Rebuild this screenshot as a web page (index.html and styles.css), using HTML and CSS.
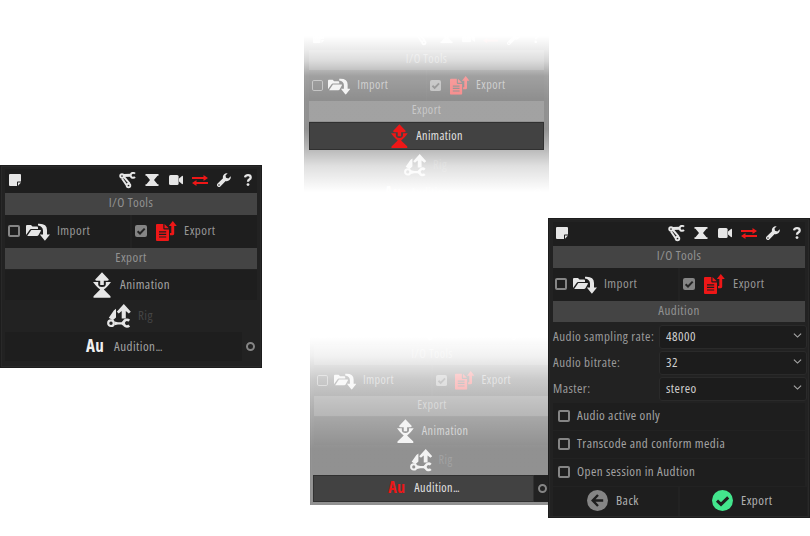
FILE: index.html
```html
<!DOCTYPE html>
<html lang="en">
<head>
<meta charset="utf-8">
<title>I/O Tools</title>
<link rel="stylesheet" href="styles.css">
</head>
<body>
<svg class="defs" aria-hidden="true">
  <symbol id="note" viewBox="0 0 12 12"><path d="M1 0H11Q12 0 12 1V7.5H8.7Q8 7.5 8 8.2V12H1Q0 12 0 11V1Q0 0 1 0Z"/><path d="M9 8.5H12L9 11.8Z"/></symbol>
  <symbol id="bones" viewBox="0 0 18 17"><g fill="none" stroke="currentColor"><circle cx="3" cy="4" r="1.8" stroke-width="1.9"/><circle cx="9.5" cy="13.5" r="1.8" stroke-width="1.9"/><path d="M3 6.5L7.4 13M5 5L10.5 11.3" stroke-width="2"/><path d="M5 3.6L11.5 3.2" stroke-width="3"/><path d="M16 1.7A2.5 2.5 0 1 0 16 5" stroke-width="2"/></g></symbol>
  <symbol id="hourglass" viewBox="0 0 14 12"><path d="M.5 0H13.5V1.8H12.5L9 6L12.5 10.2H13.5V12H.5V10.2H1.5L5 6L1.5 1.8H.5Z"/></symbol>
  <symbol id="camera" viewBox="0 0 14 10"><rect width="9.6" height="10" rx="1.5"/><path d="M10 3.6L13 1Q14 .5 14 1.5V8.5Q14 9.5 13 9L10 6.4Z"/></symbol>
  <symbol id="swap" viewBox="0 0 16 11"><path d="M0 1.9H11.5V0L16 3L11.5 6V4H0ZM16 7H4.5V5L0 8L4.5 11V9.1H16Z"/></symbol>
  <symbol id="wrench" viewBox="0 0 14 14"><path d="M13.7 3.3L11.4 5.4L9 4.8L8.5 2.5L10.7.3A4 4 0 0 0 6 5.3L.6 10.6A1.9 1.9 0 0 0 3.3 13.4L8.7 8A4 4 0 0 0 13.7 3.3ZM2 11.2A.8.8 0 1 1 2 12.8A.8.8 0 0 1 2 11.2Z"/></symbol>
  <symbol id="help" viewBox="0 0 8 12"><path d="M1 3.4Q1.4 1.2 4 1.2Q6.7 1.2 6.7 3.4Q6.7 4.6 5.3 5.5Q4 6.3 4 7.7" fill="none" stroke="currentColor" stroke-width="2.3"/><circle cx="4" cy="10.6" r="1.4"/></symbol>
  <symbol id="import" viewBox="0 0 24 18"><path d="M0 12V3Q0 2 1 2H5L6.5 3.5H11Q12 3.5 12 4.5V6H5.2Q4.2 6 3.8 6.8Z"/><path d="M5.3 7H14.4Q15.4 7 14.8 8L12.4 12.2Q12 13 11 13H1.2Z"/><path d="M12 .8Q21 .2 21 7V11.5H24L18.9 17.8L13.8 11.5H17V7.5Q16.7 3.4 12 2.6Z"/></symbol>
  <symbol id="export" viewBox="0 0 21 20"><path fill-rule="evenodd" d="M1 3H7.3V7.5Q7.3 8.5 8.3 8.5H13V19Q13 20 12 20H1Q0 20 0 19V4Q0 3 1 3ZM3 10.2V11.4H10.2V10.2ZM3 12.7V13.9H10.2V12.7ZM3 15.4V16.6H10.2V15.4Z"/><path d="M8.5 3L12.8 7.3H8.5Z"/><path d="M14 14.2V12H15.3V5H12.8L16.8 0L20.8 5H18.2V12.8Q18.2 14.2 16.8 14.2Z"/></symbol>
  <symbol id="anim" viewBox="0 0 18 26"><path d="M9 .3L15.8 7.4Q15.6 9 13.8 8.8H10.8V13H7.2V8.8H4.2Q2.4 9 2.2 7.4Z"/><path d="M0 9.9H5.2V12.4Q5.4 14.9 9 14.9T12.8 12.4V9.9H18L15 13.7Q13 16 10.8 17.6L17.5 24.2V25.8H.5V24.2L7.2 17.6Q5 16 3 13.7Z"/></symbol>
  <symbol id="rigup" viewBox="0 0 24 24"><path d="M9 4.8V13.5L5.8 16.2L1.8 13.7L6.8 6.5ZM16.8 0L23.8 7.8L21.8 9.4L18.8 7V14.5H14.7V7L11.7 9.4L9.8 7.8Z"/><circle cx="4" cy="19.2" r="2.8" fill="none" stroke="currentColor" stroke-width="2.2"/><path d="M7.5 17.5L11 18.2H14.5L16 17V21.5L14.5 20.6H11L7.5 21.3Z"/><path d="M22.2 16.7A3.3 3.3 0 1 0 22.2 21.5" fill="none" stroke="currentColor" stroke-width="2.7"/></symbol>
  <symbol id="tick" viewBox="0 0 12 12"><path d="M2.6 6.2L5 8.5L9.7 3.6" fill="none" stroke="#252525" stroke-width="2"/></symbol>
  <symbol id="chev" viewBox="0 0 8 5"><path d="M.4.6L4 4.1L7.6.6" fill="none" stroke="currentColor" stroke-width="1.1"/></symbol>
  <symbol id="back" viewBox="0 0 21 21"><circle cx="10.5" cy="10.5" r="10.5"/><path d="M11 5L5.7 10.5L11 16M6 10.5H16.2" fill="none" stroke="#1e1e1e" stroke-width="2.4"/></symbol>
  <symbol id="done" viewBox="0 0 21 21"><circle cx="10.5" cy="10.5" r="10.5"/><path d="M5 10.6L9 14.4L16.2 7.4" fill="none" stroke="#1e1e1e" stroke-width="3"/></symbol>
</svg>

<section class="panel menu p1">
  <div class="bar"><svg class="i note"><use href="#note"/></svg><div class="tools"><span><svg class="i bones"><use href="#bones"/></svg></span><span><svg class="i hour"><use href="#hourglass"/></svg></span><span><svg class="i cam"><use href="#camera"/></svg></span><span><svg class="i swap red"><use href="#swap"/></svg></span><span><svg class="i wrench"><use href="#wrench"/></svg></span><span><svg class="i help"><use href="#help"/></svg></span></div></div>
  <h2>I/O Tools</h2>
  <div class="modes"><div><i class="box"></i><svg class="i imp"><use href="#import"/></svg><b>Import</b></div><div><i class="box on"><svg class="i"><use href="#tick"/></svg></i><svg class="i exp red"><use href="#export"/></svg><b>Export</b></div></div>
  <h2>Export</h2>
  <div class="item anim"><svg class="i"><use href="#anim"/></svg><b>Animation</b></div>
  <div class="item rig"><svg class="i"><use href="#rigup"/></svg><b>Rig</b></div>
  <div class="last"><div class="item au"><strong>Au</strong><b>Audition<span class="dots">...</span></b></div><i class="ring"></i></div>
</section>

<section class="step s2"><div class="panel menu">
  <div class="bar"><svg class="i note"><use href="#note"/></svg><div class="tools"><span><svg class="i bones"><use href="#bones"/></svg></span><span><svg class="i hour"><use href="#hourglass"/></svg></span><span><svg class="i cam"><use href="#camera"/></svg></span><span><svg class="i swap red"><use href="#swap"/></svg></span><span><svg class="i wrench"><use href="#wrench"/></svg></span><span><svg class="i help"><use href="#help"/></svg></span></div></div>
  <h2>I/O Tools</h2>
  <div class="modes"><div><i class="box"></i><svg class="i imp"><use href="#import"/></svg><b>Import</b></div><div><i class="box on"><svg class="i"><use href="#tick"/></svg></i><svg class="i exp red"><use href="#export"/></svg><b>Export</b></div></div>
  <h2>Export</h2>
  <div class="item anim hot"><svg class="i"><use href="#anim"/></svg><b>Animation</b></div>
  <div class="item rig"><svg class="i"><use href="#rigup"/></svg><b>Rig</b></div>
  <div class="last"><div class="item au"><strong>Au</strong><b>Audition<span class="dots">...</span></b></div><i class="ring"></i></div>
</div></section>

<section class="step s3"><div class="panel menu">
  <div class="bar"><svg class="i note"><use href="#note"/></svg><div class="tools"><span><svg class="i bones"><use href="#bones"/></svg></span><span><svg class="i hour"><use href="#hourglass"/></svg></span><span><svg class="i cam"><use href="#camera"/></svg></span><span><svg class="i swap red"><use href="#swap"/></svg></span><span><svg class="i wrench"><use href="#wrench"/></svg></span><span><svg class="i help"><use href="#help"/></svg></span></div></div>
  <h2>I/O Tools</h2>
  <div class="modes"><div><i class="box"></i><svg class="i imp"><use href="#import"/></svg><b>Import</b></div><div><i class="box on"><svg class="i"><use href="#tick"/></svg></i><svg class="i exp red"><use href="#export"/></svg><b>Export</b></div></div>
  <h2>Export</h2>
  <div class="item anim"><svg class="i"><use href="#anim"/></svg><b>Animation</b></div>
  <div class="item rig"><svg class="i"><use href="#rigup"/></svg><b>Rig</b></div>
  <div class="last hot"><div class="item au"><strong>Au</strong><b>Audition<span class="dots">...</span></b></div><i class="ring"></i></div>
</div></section>

<section class="panel p4">
  <div class="bar"><svg class="i note"><use href="#note"/></svg><div class="tools"><span><svg class="i bones"><use href="#bones"/></svg></span><span><svg class="i hour"><use href="#hourglass"/></svg></span><span><svg class="i cam"><use href="#camera"/></svg></span><span><svg class="i swap red"><use href="#swap"/></svg></span><span><svg class="i wrench"><use href="#wrench"/></svg></span><span><svg class="i help"><use href="#help"/></svg></span></div></div>
  <h2>I/O Tools</h2>
  <div class="modes"><div><i class="box"></i><svg class="i imp"><use href="#import"/></svg><b>Import</b></div><div><i class="box on"><svg class="i"><use href="#tick"/></svg></i><svg class="i exp red"><use href="#export"/></svg><b>Export</b></div></div>
  <h2>Audition</h2>
  <div class="fields">
    <label>Audio sampling rate:</label><div class="select">48000<svg class="i"><use href="#chev"/></svg></div>
    <label>Audio bitrate:</label><div class="select">32<svg class="i"><use href="#chev"/></svg></div>
    <label>Master:</label><div class="select">stereo<svg class="i"><use href="#chev"/></svg></div>
  </div>
  <div class="check"><i class="box"></i><b>Audio active only</b></div>
  <div class="check"><i class="box"></i><b>Transcode and conform media</b></div>
  <div class="check"><i class="box"></i><b>Open session in Audtion</b></div>
  <div class="actions"><div><svg class="i grey"><use href="#back"/></svg><b>Back</b></div><div><svg class="i green"><use href="#done"/></svg><b>Export</b></div></div>
</section>
</body>
</html>
```
FILE: styles.css
```css
* { box-sizing: border-box; }
body { margin: 0; width: 810px; height: 536px; background: #fff; position: relative; overflow: hidden;
  font: 13px/16px "Open Sans", "Noto Sans", sans-serif; font-stretch: 75%; letter-spacing: .45px; color: #a3a3a3; }
.defs { position: absolute; width: 0; height: 0; }
b, h2 { font-weight: 400; }
i { font-style: normal; }
svg.i { display: block; flex: none; fill: currentColor; overflow: visible; }
.panel { width: 262px; background: #222; border: 1px solid #1d1d1d; box-shadow: inset 0 0 0 1px #292929; padding: 3px 4px; }
.p1 { position: absolute; left: 0; top: 165px; height: 203px; }
.p4 { position: absolute; left: 548px; top: 218px; height: 300px; }
.menu { height: 203px; }
.p1 b, .p4 b { margin-top: -2px; }
.p1 h2, .p4 h2 { line-height: 19px; }

.bar { height: 24px; background: #1e1e1e; color: #e6e6e6; display: flex; align-items: center; justify-content: space-between; padding: 0 0 2px 4.4px; }
.note { width: 12px; height: 12px; }
.tools { display: flex; margin-right: -3px; }
.tools span { width: 24px; display: flex; justify-content: center; align-items: center; }
.bones { width: 18px; height: 17px; }
.hour { width: 14px; height: 12px; }
.cam { width: 14px; height: 10px; }
.swap { width: 16px; height: 11px; }
.wrench { width: 14px; height: 14px; }
.help { width: 8px; height: 12px; }
.red { color: #ee1717; }
.p4 .note { margin-left: -1px; }
.p4 .tools { margin-right: -4px; }

h2 { margin: 0; height: 21.5px; background: #444; font-size: 13px; line-height: 20px; text-align: center; color: #929292; }
.modes { height: 33px; display: grid; grid-template-columns: 125px 125px; gap: 2px; color: #969696; }
.modes > div { background: #1e1e1e; display: flex; align-items: center; padding-left: 3px; }
.box { width: 12px; height: 12px; border: 2px solid #858585; border-radius: 2px; flex: none; }
.box.on { border: 0; background: #858585; }
.on svg { width: 12px; height: 12px; }
.imp { width: 24px; height: 18px; margin: 1px 7px 0 6px; color: #e6e6e6; }
.exp { width: 21px; height: 20px; margin: 0 7px 0 9px; }
.p4 .modes > :first-child { padding-left: 2px; }
.p4 .modes .exp { margin-right: 8px; }

.item { display: flex; align-items: center; background: #1e1e1e; }
.anim { height: 30px; margin-top: 1px; padding-left: 88px; gap: 9px; }
.anim svg { width: 18px; height: 26px; color: #e6e6e6; }
.rig { background: none; height: 32px; padding-left: 102px; gap: 7px; color: #454545; }
.rig svg { width: 24px; height: 24px; color: #e6e6e6; }
.last { display: flex; align-items: center; height: 29px; }
.au { width: 237px; height: 29px; padding-left: 81px; }
.au strong { width: 28px; font-size: 17px; color: #f0f0f0; letter-spacing: .4px; margin-top: -2px; }
.dots { letter-spacing: -.7px; }
.ring { width: 9px; height: 9px; border: 2px solid #858585; border-radius: 50%; margin-left: 4px; }

.step { position: absolute; overflow: hidden; }
.step .panel { zoom: .935; }
.s2 { left: 304px; top: 24px; width: 245px; height: 190px; }
.s3 { left: 310px; top: 319px; width: 238px; height: 186px; }
.s3 .panel { margin-left: -.5px; }
.step::after { content: ""; position: absolute; inset: 0; z-index: 1; }
.s2::after { background: linear-gradient(#fff 12px, rgba(255,255,255,.9) 27px, rgba(255,255,255,.81) 37px, rgba(255,255,255,.58) 52px, rgba(255,255,255,.5) 75px, rgba(255,255,255,.5) 105px, rgba(255,255,255,.7) 127px, rgba(255,255,255,.86) 142px, #fff 168px); }
.s3::after { background: linear-gradient(#fff 18px, rgba(255,255,255,.93) 37px, rgba(255,255,255,.77) 60px, rgba(255,255,255,.64) 90px, rgba(255,255,255,.5) 130px); }
.hot { position: relative; z-index: 2; background: #424242; box-shadow: inset 0 0 0 1px #303030; color: #e2e2e2; }
.anim.hot svg, .hot strong { color: #ee1717; }
.last.hot { background: #222; box-shadow: none; margin-left: -1px; }
.hot .au { background: #424242; box-shadow: inset 0 0 0 1px #303030; width: 236px; padding-left: 80px; }
.hot .ring { width: 10px; height: 10px; border-width: 2.2px; }

.fields { display: grid; grid-template-columns: 106px 148px; grid-auto-rows: 24px; row-gap: 2px; padding-top: 2.5px; margin-bottom: 2px; color: #9a9a9a; }
.fields label { line-height: 23px; white-space: nowrap; }
.select { background: #1c1c1c; border: 1px solid #2a2a2a; border-radius: 3px; color: #cfcfcf; display: flex; align-items: center; justify-content: space-between; padding: 0 4px 2px 6px; }
.select svg { width: 9px; height: 5px; color: #aaa; }
.check { height: 27px; margin-bottom: 1px; background: #1e1e1e; display: flex; align-items: center; gap: 7px; padding-left: 5px; }
.actions { display: grid; grid-template-columns: 125px 127px; gap: 2px; height: 29px; color: #b0b0b0; }
.actions > div { background: #1e1e1e; display: flex; align-items: center; gap: 8px; padding: 0 0 1px 34px; }
.actions > div + div { padding-left: 32px; }
.actions svg { width: 21px; height: 21px; }
.grey { color: #858585; }
.green { color: #43e58d; }
```
